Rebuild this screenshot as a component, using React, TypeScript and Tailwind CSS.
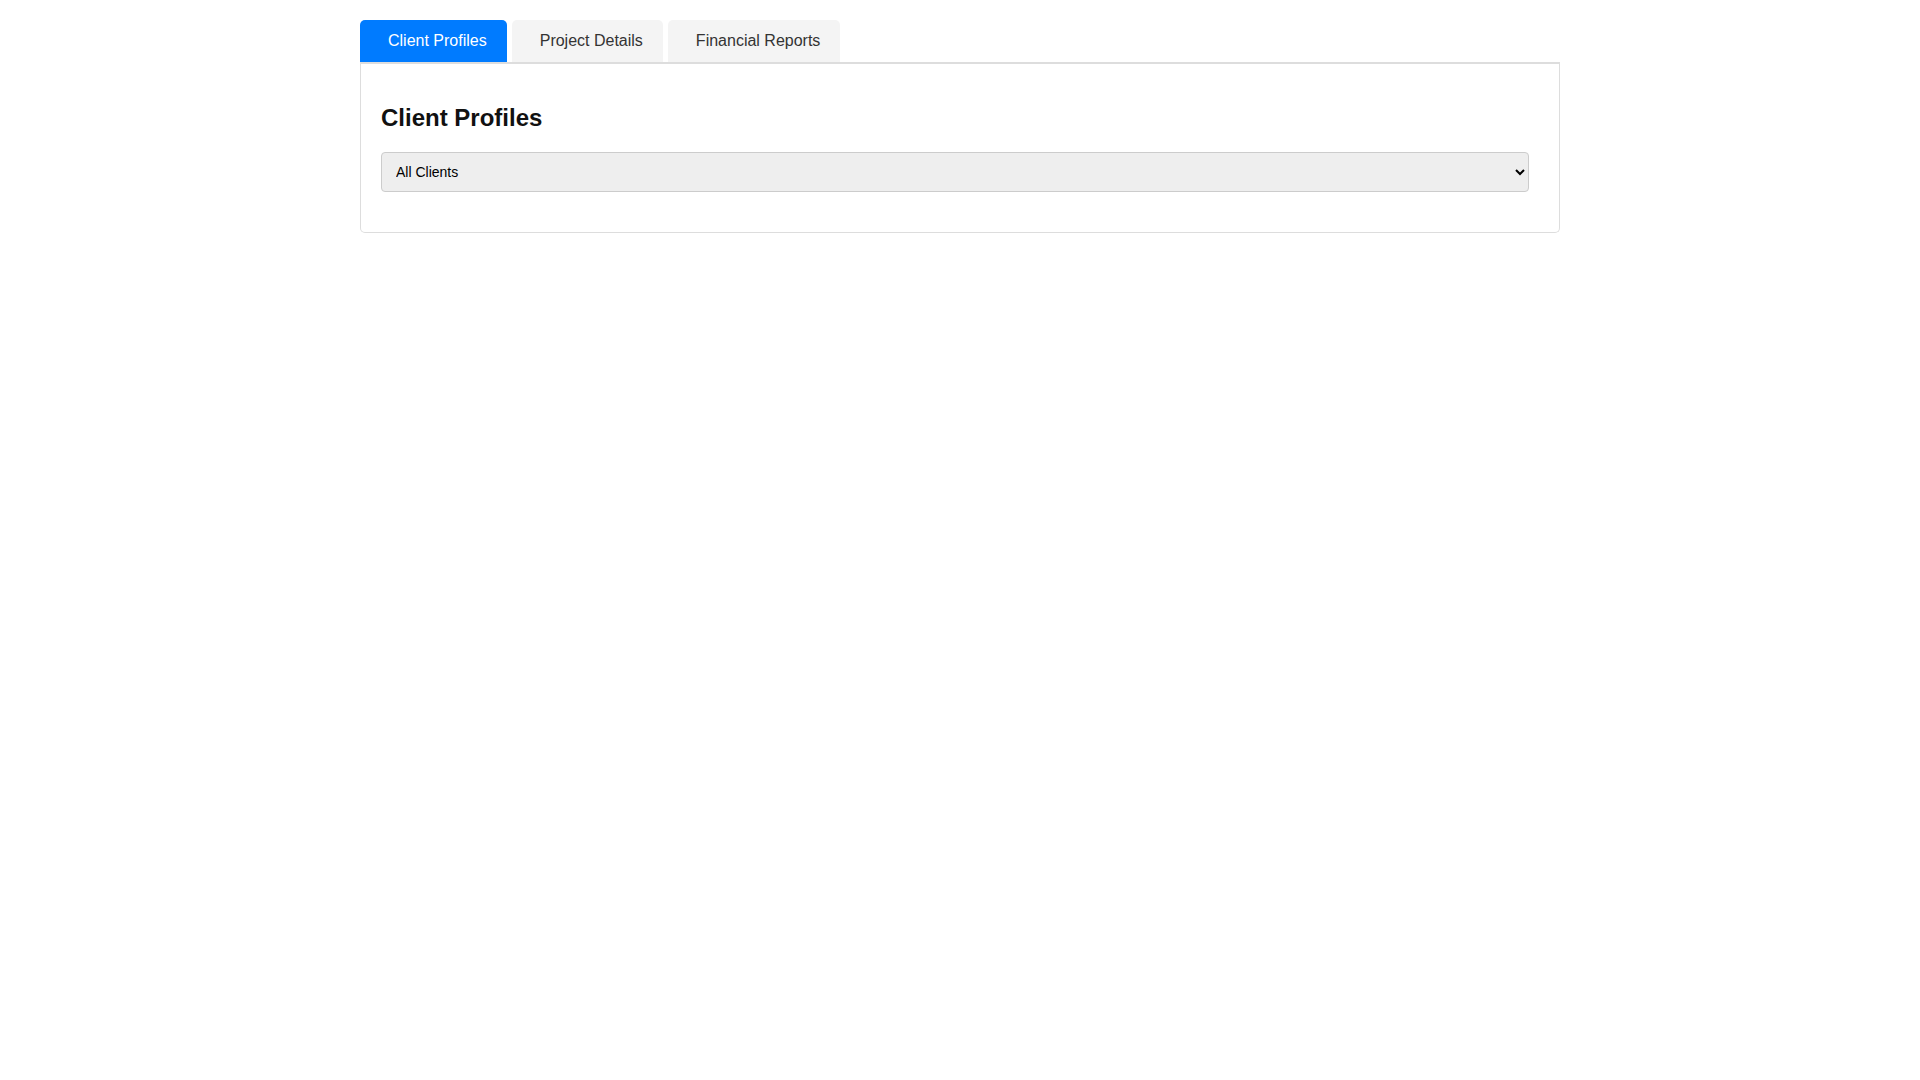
import { useState } from 'react'

const tabs = ['Client Profiles', 'Project Details', 'Financial Reports']

export default function App() {
  const [active, setActive] = useState(0)

  return (
    <div className="min-h-screen bg-white font-['Liberation_Sans',Arial,sans-serif] pt-5">
      <div className="mx-auto w-[1200px]">
        <div className="flex gap-[5px] border-b-2 border-[#ddd]">
          {tabs.map((t, i) => (
            <button
              key={t}
              onClick={() => setActive(i)}
              className={
                i === active
                  ? 'rounded-t-[5px] bg-[#007bff] text-white pl-7 pr-5 py-3 text-[16px] leading-[18px]'
                  : 'rounded-t-[5px] bg-[#f4f4f4] text-[#333] pl-7 pr-5 py-3 text-[16px] leading-[18px]'
              }
            >
              {t}
            </button>
          ))}
        </div>

        <div className="border border-t-0 border-[#ddd] rounded-b-[5px] px-5 pt-5 pb-10 bg-white">
          <h2 className="mt-5 text-[24px] leading-[27.6px] font-bold text-[#111]">{tabs[active]}</h2>
          <select className="mt-5 block w-[calc(100%-10px)] h-[40px] rounded-[4px] border border-[#ccc] bg-[#eee] px-[10px] text-[14px] text-black">
            <option>All Clients</option>
            <option>Active Clients</option>
            <option>Inactive Clients</option>
          </select>
        </div>
      </div>
    </div>
  )
}
